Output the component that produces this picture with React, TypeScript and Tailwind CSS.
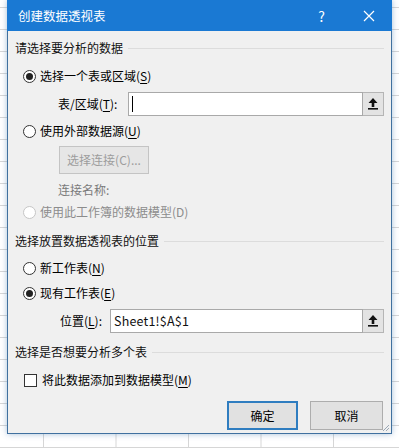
import React from "react";

const Key = ({ k }: { k: string }) => (
  <>
    (<span className="underline underline-offset-2">{k}</span>)
  </>
);

const Radio = ({ checked, disabled }: { checked?: boolean; disabled?: boolean }) => (
  <span
    className={`w-[13px] h-[13px] rounded-full border flex items-center justify-center bg-white shrink-0 ${
      disabled ? "border-[#c6c6c6]" : "border-[#333]"
    }`}
  >
    {checked && <span className="w-[7px] h-[7px] rounded-full bg-[#222]" />}
  </span>
);

const PickIcon = () => (
  <svg width="12" height="14" viewBox="0 0 12 14">
    <path d="M6 1 L10.5 6 H7.3 V10 H4.7 V6 H1.5 Z" fill="#111" />
    <rect x="1" y="11" width="10" height="1.6" fill="#111" />
  </svg>
);

const RefInput = ({ value, cursor }: { value?: string; cursor?: boolean }) => (
  <div className="flex flex-1 h-[24px]">
    <div className="flex-1 bg-white border border-[#a9a9a9] flex items-center pl-[3px] text-[12.5px] text-[#111]">
      {cursor && <span className="w-px h-[16px] bg-black" />}
      {value && <span className="tracking-[0.2px]">{value}</span>}
    </div>
    <div className="w-[21px] bg-[#e3e3e3] border border-[#b5b5b5] border-l-0 flex items-center justify-center">
      <PickIcon />
    </div>
  </div>
);

const Section = ({ title }: { title: string }) => (
  <div className="flex items-center h-[18px] pl-[7px] pr-[7px]">
    <span className="text-[#111] whitespace-nowrap">{title}</span>
    <span className="flex-1 ml-[5px] h-px bg-[#dcdcdc]" />
  </div>
);

export default function App() {
  return (
    <div className="relative w-[399px] h-[448px] overflow-hidden bg-white bg-[linear-gradient(to_right,#d6d6d6_1px,transparent_1px),linear-gradient(to_bottom,#d6d6d6_1px,transparent_1px)] bg-[size:72.5px_22px] bg-[position:43px_7px] font-['Microsoft_YaHei','Noto_Sans_CJK_SC',sans-serif] text-[12px] leading-[18px]">
      {/* dialog window */}
      <div className="absolute left-[7px] top-0 w-[385px] h-[434px] bg-[#f0f0f0] border border-[#40709f] border-t-0 shadow-[0_0_6px_rgba(60,110,170,0.45)] flex flex-col">
        {/* title bar */}
        <div className="h-[31px] bg-[#1a79d3] flex items-center text-white shrink-0 -mx-px">
          <span className="ml-[11px] text-[12.5px]">创建数据透视表</span>
          <span className="ml-auto mr-[38px] text-[14px]">?</span>
          <svg width="12" height="12" viewBox="0 0 12 12" className="mr-[17px]">
            <path d="M1 1 L11 11 M11 1 L1 11" stroke="#fff" strokeWidth="1.2" />
          </svg>
        </div>

        <div className="flex flex-col pt-[8px]">
          <Section title="请选择要分析的数据" />

          <div className="flex items-center gap-[4px] h-[18px] mt-[10px] pl-[15px]">
            <Radio checked />
            <span>
              选择一个表或区域<Key k="S" />
            </span>
          </div>

          <div className="flex items-center h-[24px] mt-[7px] pl-[50px] pr-[7px]">
            <span className="w-[70px]">
              表/区域<Key k="T" />:
            </span>
            <RefInput cursor />
          </div>

          <div className="flex items-center gap-[4px] h-[18px] mt-[6px] pl-[15px]">
            <Radio />
            <span>
              使用外部数据源<Key k="U" />
            </span>
          </div>

          <div className="mt-[6px] pl-[51px]">
            <div className="w-[90px] h-[28px] bg-[#e6e6e6] border border-[#c4c4c4] flex items-center justify-center text-[#9d9d9d]">
              选择连接(C)...
            </div>
          </div>

          <div className="h-[18px] mt-[7px] pl-[50px] text-[#7a7a7a]">连接名称:</div>

          <div className="flex items-center gap-[4px] h-[18px] mt-[4px] pl-[15px] text-[#8c8c8c]">
            <Radio disabled />
            <span>使用此工作簿的数据模型(D)</span>
          </div>

          <div className="mt-[11px]">
            <Section title="选择放置数据透视表的位置" />
          </div>

          <div className="flex items-center gap-[4px] h-[18px] mt-[9px] pl-[15px]">
            <Radio />
            <span>
              新工作表<Key k="N" />
            </span>
          </div>

          <div className="flex items-center gap-[4px] h-[18px] mt-[7px] pl-[15px]">
            <Radio checked />
            <span>
              现有工作表<Key k="E" />
            </span>
          </div>

          <div className="flex items-center h-[24px] mt-[7px] pl-[52px] pr-[7px]">
            <span className="w-[50px]">
              位置<Key k="L" />:
            </span>
            <RefInput value="Sheet1!$A$1" />
          </div>

          <div className="mt-[10px]">
            <Section title="选择是否想要分析多个表" />
          </div>

          <div className="flex items-center gap-[5px] h-[18px] mt-[10px] pl-[16px]">
            <span className="w-[13px] h-[13px] border border-[#333] bg-white shrink-0" />
            <span>
              将此数据添加到数据模型<Key k="M" />
            </span>
          </div>

          <div className="flex justify-end gap-[12px] mt-[12px] pr-[8px]">
            <div className="w-[71px] h-[29px] bg-[#e1e1e1] border-2 border-[#2f7dc0] flex items-center justify-center">
              确定
            </div>
            <div className="w-[73px] h-[29px] bg-[#e1e1e1] border border-[#adadad] flex items-center justify-center">
              取消
            </div>
          </div>
        </div>

        {/* size grip */}
        <svg width="8" height="8" viewBox="0 0 8 8" className="absolute right-[1px] bottom-[1px]">
          <path d="M7 1 L1 7 M7 4 L4 7" stroke="#9aa7b5" strokeWidth="1" />
        </svg>
      </div>
    </div>
  );
}
